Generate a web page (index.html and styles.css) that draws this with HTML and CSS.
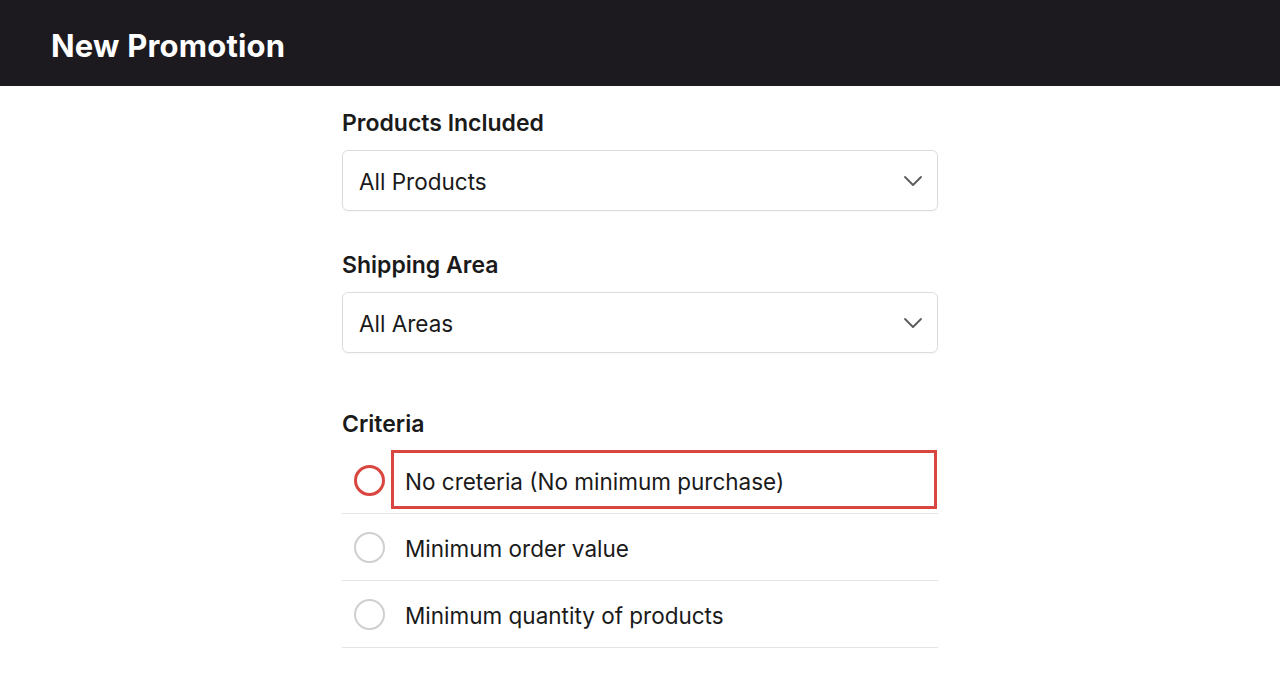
FILE: index.html
```html
<!DOCTYPE html>
<html lang="en">
<head>
    <meta charset="UTF-8">
    <meta name="viewport" content="width=device-width, initial-scale=1.0">
    <title>New Promotion</title>
    <link rel="stylesheet" href="styles.css">
</head>
<body>
    <div class="header">
        <h1>New Promotion</h1>
    </div>
    <div class="form">
        <div class="field">
            <label class="field-label">Products Included</label>
            <div class="select">
                <span>All Products</span>
                <svg class="chevron" width="20" height="12" viewBox="0 0 20 12"><path d="M2 2 L10 10 L18 2" fill="none" stroke="#5a5a5a" stroke-width="1.8" stroke-linecap="round" stroke-linejoin="round"/></svg>
            </div>
        </div>
        <div class="field">
            <label class="field-label">Shipping Area</label>
            <div class="select">
                <span>All Areas</span>
                <svg class="chevron" width="20" height="12" viewBox="0 0 20 12"><path d="M2 2 L10 10 L18 2" fill="none" stroke="#5a5a5a" stroke-width="1.8" stroke-linecap="round" stroke-linejoin="round"/></svg>
            </div>
        </div>
        <div class="field criteria">
            <label class="field-label">Criteria</label>
            <div class="options">
                <div class="option">
                    <span class="radio active"></span>
                    <span class="option-text highlight">No creteria (No minimum purchase)</span>
                </div>
                <div class="option">
                    <span class="radio"></span>
                    <span class="option-text">Minimum order value</span>
                </div>
                <div class="option">
                    <span class="radio"></span>
                    <span class="option-text">Minimum quantity of products</span>
                </div>
            </div>
        </div>
    </div>
</body>
</html>
```

FILE: styles.css
```css
body {
    font-family: Inter, "Noto Sans", sans-serif;
    background: #fff;
    margin: 0;
    color: #1a1a1a;
}
.header {
    background: #1c1a1f;
    height: 86px;
    display: flex;
    align-items: center;
    padding-left: 51px;
}
.header h1 {
    color: #fff;
    font-size: 31px;
    font-weight: 700;
    margin: 0;
    padding-top: 5px;
    letter-spacing: 0.2px;
}
.form {
    width: 596px;
    margin: 0 auto;
    padding-top: 24px;
}
.field {
    margin-bottom: 41px;
}
.field-label {
    display: block;
    font-size: 23px;
    font-weight: 600;
    margin-bottom: 14px;
    line-height: 26px;
}
.select {
    height: 59px;
    border: 1px solid #dcdcdc;
    border-radius: 6px;
    display: flex;
    align-items: center;
    justify-content: space-between;
    padding: 0 14px 0 16px;
    font-size: 22.5px;
    box-shadow: 0 1px 2px rgba(0,0,0,0.04);
}
.select span {
    margin-top: 2px;
}
.criteria {
    margin-top: 58px;
}
.criteria .field-label {
    margin-bottom: 10px;
}
.option {
    height: 66px;
    border-bottom: 1px solid #e4e4e4;
    display: flex;
    align-items: center;
    font-size: 22.5px;
}
.option-text {
    position: relative;
    margin-top: 2px;
}
.radio {
    width: 31px;
    height: 31px;
    border: 2px solid #cfcfcf;
    border-radius: 50%;
    margin-left: 12px;
    margin-right: 20px;
    box-sizing: border-box;
}
.radio.active {
    border: 3px solid #d9463f;
}
.highlight::before {
    content: "";
    position: absolute;
    left: -14px;
    top: -18px;
    width: 546px;
    height: 59px;
    box-sizing: border-box;
    border: 3px solid #d9463f;
}
```
